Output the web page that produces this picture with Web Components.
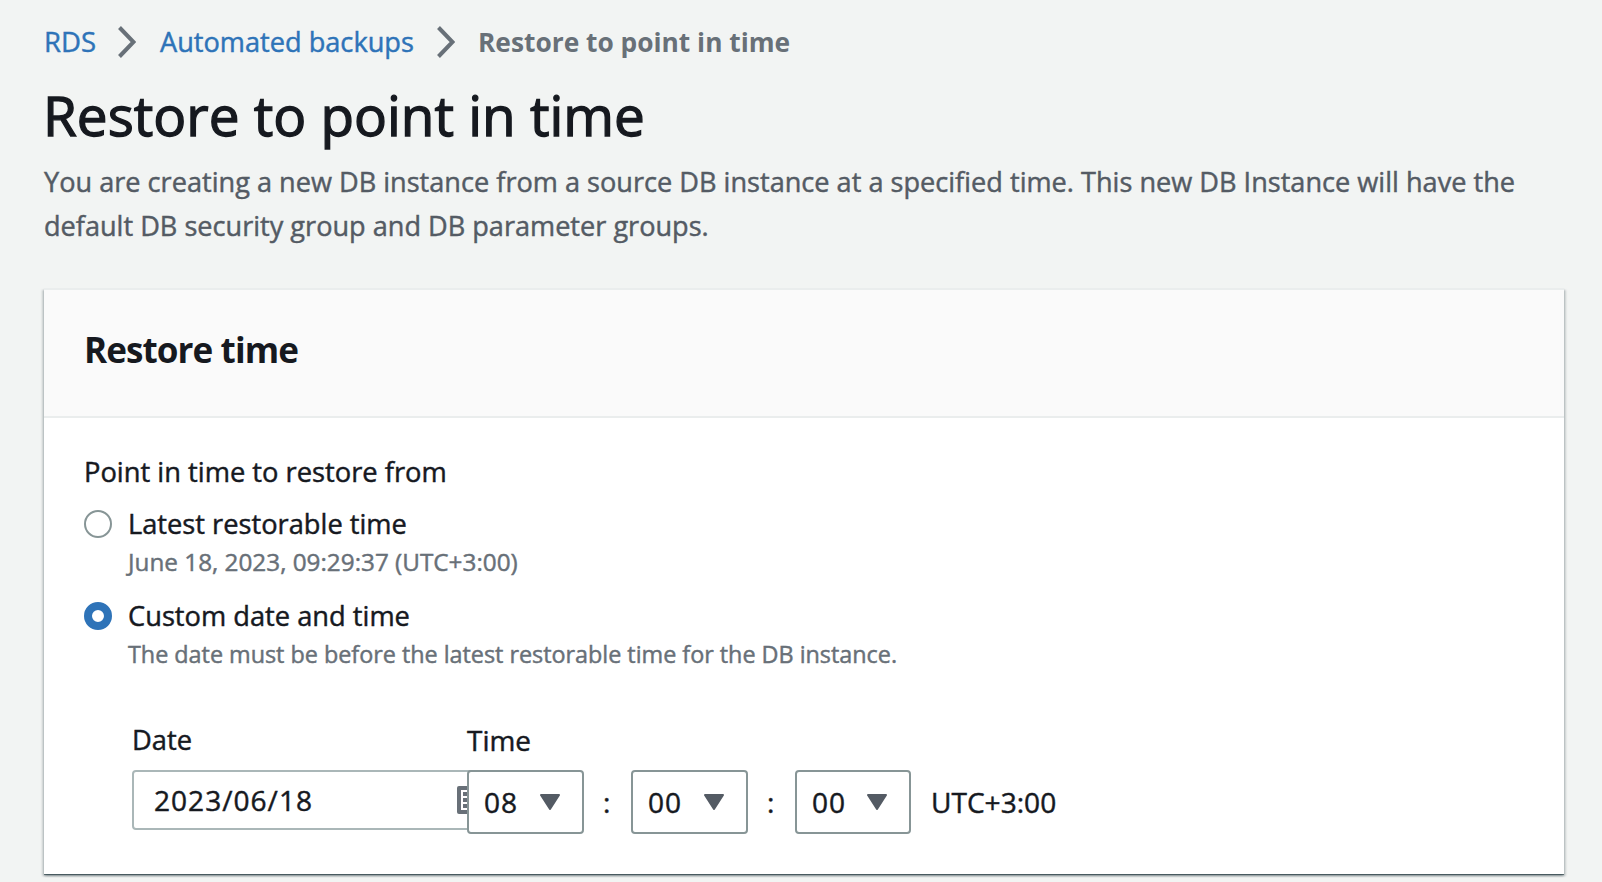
<!DOCTYPE html>
<html lang="en">
<head>
<meta charset="utf-8">
<title>Restore to point in time</title>
<style>
body{margin:0;height:882px;overflow:hidden;background:#f2f4f3;font-family:"Open Sans","Noto Sans",sans-serif;color:#16191f}
</style>
</head>
<body>
<restore-page></restore-page>
<script>
function define(name, html, setup) {
  const t = document.createElement('template');
  t.innerHTML = html;
  customElements.define(name, class extends HTMLElement {
    connectedCallback() {
      if (this.shadowRoot) return;
      this.attachShadow({mode: 'open'}).append(t.content.cloneNode(true));
      if (setup) setup(this, this.shadowRoot);
    }
  });
}

/* One line of text set to a given measure: size first, tracking for the rest. */
define('fit-text', `<style>
:host{display:block;white-space:nowrap;font-size:27px;font-weight:400;line-height:44px;-webkit-text-stroke:.45px currentColor}
</style><span><slot></slot></span>`, (el, root) => {
  const w = +el.getAttribute('w');
  el.style.width = w + 'px';
  const span = root.querySelector('span');
  const size = parseFloat(getComputedStyle(el).fontSize);
  const ratio = Math.min(1.04, Math.max(0.975, w / span.getBoundingClientRect().width));
  span.style.fontSize = size * ratio + 'px';
  const rest = w - span.getBoundingClientRect().width;
  if (Math.abs(rest) > 1) span.style.letterSpacing = rest / el.textContent.length + 'px';
});

define('crumb-chevron', `<style>
:host{display:block;width:18px;height:32px}svg{display:block}
</style><svg width="18" height="32" viewBox="0 0 18 32"><path d="M1.5 1.5L15.5 16L1.5 30.5" fill="none" stroke="#687078" stroke-width="4"/></svg>`);

define('crumb-trail', `<style>
:host{display:flex;align-items:center;height:44px;padding:20px 0 0 44px}
fit-text{color:#2e73b8}
.cur{color:#687078;font-weight:700;-webkit-text-stroke:0}
crumb-chevron{margin:0 24px 0 21px}
crumb-chevron.b{margin:0 23px 0 23px}
</style><fit-text w="52">RDS</fit-text><crumb-chevron style="margin-left:22px"></crumb-chevron><fit-text w="254">Automated backups</fit-text><crumb-chevron class="b"></crumb-chevron><fit-text class="cur" w="312">Restore to point in time</fit-text>`);

define('page-heading', `<style>
:host{display:block;padding:18px 0 0 44px}
.t{font-size:56px;line-height:64px;margin:0 0 13px -1px;-webkit-text-stroke-width:1.3px}
.p{color:#545b64}
</style><fit-text class="t" w="602">Restore to point in time</fit-text>
<fit-text class="p" w="1472">You are creating a new DB instance from a source DB instance at a specified time. This new DB Instance will have the</fit-text>
<fit-text class="p" w="665">default DB security group and DB parameter groups.</fit-text>`);

define('form-card', `<style>
:host{display:block;margin:40px 38px 0 44px;background:#fff;border-top:2px solid #eaeded;height:584px;box-shadow:0 2px 2px 0 rgba(0,28,36,.3),2px 2px 2px 0 rgba(0,28,36,.15),-2px 2px 2px 0 rgba(0,28,36,.15),0 1px 0 #879596}
header{height:126px;background:#fafafa;border-bottom:2px solid #eaeded;display:flex;align-items:center;box-sizing:content-box}
::slotted([slot=title]){font-size:36px;font-weight:700;margin:-8px 0 0 40px;-webkit-text-stroke:0}
section{padding:32px 40px 0 40px}
</style><header><slot name="title"></slot></header><section><slot></slot></section>`);

define('radio-option', `<style>
:host{display:grid;grid-template-columns:28px 1fr;column-gap:16px}
i{width:28px;height:28px;box-sizing:border-box;border:2px solid #879596;border-radius:50%;align-self:center;background:#fff}
:host([checked]) i{border:8px solid #2e73b8}
div{grid-column:2}
::slotted([slot=hint]){color:#687078;font-size:24px;line-height:32px}
</style><i></i><slot name="label"></slot><div><slot name="hint"></slot></div>`);

define('date-input', `<style>
:host{display:flex;align-items:center;box-sizing:border-box;width:360px;height:60px;border:2px solid #aab7b8;border-radius:4px;padding-left:20px;background:#fff}
svg{margin-left:144px;flex:none}
</style><slot></slot><svg width="28" height="28" viewBox="0 0 28 28"><rect width="28" height="28" rx="2" fill="#687078"/><path d="M4 4H24V24H4z" fill="#fff"/><path d="M6 8H22M6 14H22M6 20H22" stroke="#687078" stroke-width="4" stroke-dasharray="4.5 1.25"/></svg>`);

define('time-select', `<style>
:host{display:flex;align-items:center;justify-content:space-between;box-sizing:border-box;width:117px;height:64px;border:2px solid #879596;border-radius:4px;padding:0 22px 0 15px;background:#fff}
:host(.last){width:116px}
</style><slot></slot><svg width="20" height="16" viewBox="0 0 20 16"><path d="M1 1H19L10 15z" fill="#545b64" stroke="#545b64" stroke-width="2" stroke-linejoin="round"/></svg>`);

define('date-time-fields', `<style>
:host{display:grid;grid-template-columns:335px 1fr;row-gap:7px;margin:48px 0 0 48px}
.date-cell{min-width:0}
.time{display:flex;align-items:center}
.time,time-select{position:relative}
.sep{width:11px;margin:0 17px 0 19px}
.zone{margin-left:20px}
</style>
<fit-text w="60">Date</fit-text><fit-text w="64">Time</fit-text>
<div class="date-cell"><date-input><fit-text w="159">2023/06/18</fit-text></date-input></div>
<div class="time">
<time-select><fit-text w="34">08</fit-text></time-select><fit-text class="sep" w="11">:</fit-text><time-select><fit-text w="34">00</fit-text></time-select><fit-text class="sep" w="11">:</fit-text><time-select class="last"><fit-text w="34">00</fit-text></time-select><fit-text class="zone" w="126">UTC+3:00</fit-text></div>`);

define('restore-page', `<style>
:host{display:block}
.q{margin-bottom:8px}
radio-option + radio-option{margin-top:16px}
</style>
<crumb-trail></crumb-trail>
<page-heading></page-heading>
<form-card>
<fit-text slot="title" w="214">Restore time</fit-text>
<fit-text class="q" w="363">Point in time to restore from</fit-text>
<radio-option><fit-text slot="label" w="279">Latest restorable time</fit-text><fit-text slot="hint" w="390">June 18, 2023, 09:29:37 (UTC+3:00)</fit-text></radio-option>
<radio-option checked><fit-text slot="label" w="282">Custom date and time</fit-text><fit-text slot="hint" w="769">The date must be before the latest restorable time for the DB instance.</fit-text></radio-option>
<date-time-fields></date-time-fields>
</form-card>`);
</script>
</body>
</html>
